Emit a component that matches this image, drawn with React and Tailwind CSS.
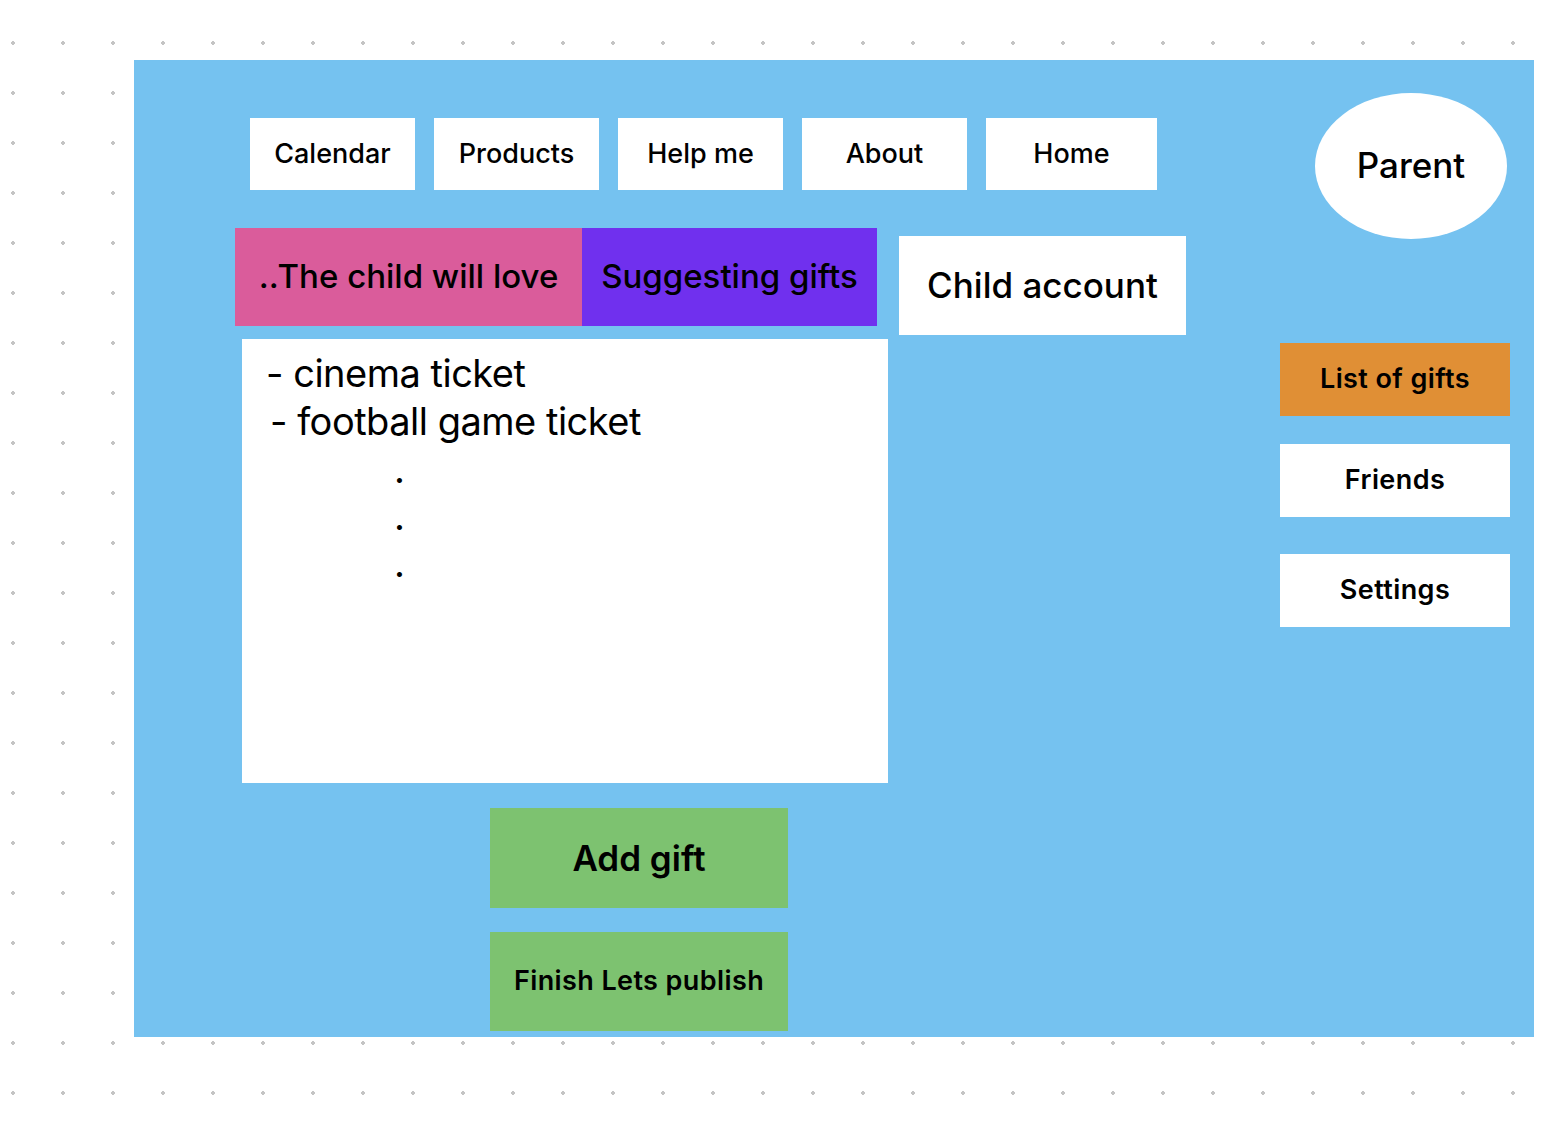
import React from "react";

const navItems = ["Calendar", "Products", "Help me", "About", "Home"];

const NavButton = ({ label, wide }) => (
  <div
    className={`flex h-[72px] items-center justify-center bg-white text-[27px] font-medium text-black ${
      wide ? "w-[171px]" : "w-[165px]"
    }`}
  >
    {label}
  </div>
);

const SideButton = ({ label, className }) => (
  <div
    className={`flex h-[73px] w-[230px] items-center justify-center text-[27px] font-semibold tracking-[0.4px] text-black ${className}`}
  >
    {label}
  </div>
);

const App = () => {
  return (
    <div
      className="min-h-screen w-full bg-white bg-[radial-gradient(circle,#c4c4c4_1.6px,transparent_1.8px)] bg-[length:50px_50px] bg-[position:-12px_18px] pt-[60px] pl-[134px]"
      style={{ fontFamily: "Inter, 'Noto Sans', sans-serif" }}
    >
      <div className="flex h-[977px] w-[1400px] bg-[#75c2f0]">
        {/* left side */}
        <div className="flex w-[1146px] shrink-0 flex-col">
          <div className="ml-[116px] mt-[58px] flex gap-[19px]">
            {navItems.map((item) => (
              <NavButton key={item} label={item} wide={item === "Home"} />
            ))}
          </div>

          <div className="ml-[101px] mt-[38px] flex items-start">
            <div className="flex h-[98px] w-[347px] items-center justify-center bg-[#da5c9b] text-[33px] font-medium text-black">
              ..The child will love
            </div>
            <div className="flex h-[98px] w-[295px] items-center justify-center bg-[#7030ee] text-[33px] font-medium text-black">
              Suggesting gifts
            </div>
            <div className="ml-[22px] mt-[8px] flex h-[99px] w-[287px] items-center justify-center bg-white text-[35px] font-medium text-black">
              Child account
            </div>
          </div>

          <div className="ml-[108px] mt-[4px] h-[444px] w-[646px] bg-white pl-[24px] pt-[10px] text-[38px] leading-[48px] tracking-[-0.5px] text-black">
            <p>- cinema ticket</p>
            <p className="pl-[4px]">- football game ticket</p>
            <div className="mt-[1px] pl-[128px] leading-[47px]">
              <p>.</p>
              <p>.</p>
              <p>.</p>
            </div>
          </div>

          <div className="ml-[356px] mt-[25px] flex h-[100px] w-[298px] items-center justify-center bg-[#7dc270] text-[35px] font-semibold text-black">
            Add gift
          </div>
          <div className="ml-[356px] mt-[24px] flex h-[99px] w-[298px] items-center justify-center bg-[#7dc270] text-[27px] font-semibold tracking-[0.4px] text-black">
            Finish Lets publish
          </div>
        </div>

        {/* right side */}
        <div className="flex flex-col">
          <div className="ml-[35px] mt-[33px] flex h-[146px] w-[192px] items-center justify-center rounded-[50%] bg-white pb-[2px] text-[35px] font-medium text-black">
            Parent
          </div>
          <SideButton label="List of gifts" className="mt-[104px] bg-[#e08f35]" />
          <SideButton label="Friends" className="mt-[28px] bg-white" />
          <SideButton label="Settings" className="mt-[37px] bg-white" />
        </div>
      </div>
      <div className="h-[95px]" />
    </div>
  );
};

export default App;
